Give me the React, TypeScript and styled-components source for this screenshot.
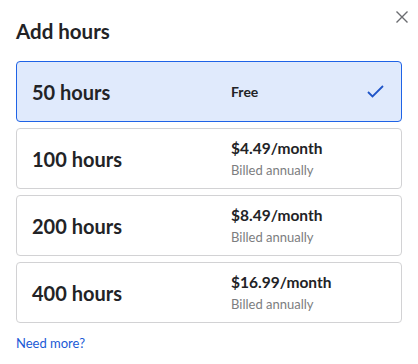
import React from "react";
import styled, { createGlobalStyle } from "styled-components";

const Global = createGlobalStyle`
  html, body { margin: 0; padding: 0; background: #ffffff; }
  body { font-family: Lato, "Noto Sans", sans-serif; color: #222326; }
`;

const Dialog = styled.div`
  width: 418px;
  height: 364px;
  box-sizing: border-box;
  padding: 0 16px;
  display: flex;
  flex-direction: column;
`;

const Header = styled.div`
  display: flex;
  justify-content: space-between;
  align-items: flex-start;
  height: 61px;
`;

const Title = styled.h2`
  margin: 18px 0 0 0;
  font-size: 20.5px;
  font-weight: 700;
  line-height: 26px;
  color: #222326;
`;

const Close = styled.button`
  border: none;
  background: none;
  padding: 0;
  margin: 11px -6px 0 0;
  width: 12px;
  height: 12px;
  display: flex;
  cursor: pointer;
`;

const List = styled.div`
  display: flex;
  flex-direction: column;
  gap: 6px;
`;

const Card = styled.div<{ $selected?: boolean }>`
  box-sizing: border-box;
  height: 61px;
  border: 1px solid ${(p) => (p.$selected ? "#1f63e6" : "#d2d2d4")};
  background: ${(p) => (p.$selected ? "#e0eafc" : "#ffffff")};
  border-radius: 4px;
  display: grid;
  grid-template-columns: 199px 1fr auto;
  align-items: center;
  padding: 0 17px 0 15px;
`;

const Hours = styled.div`
  font-size: 20px;
  font-weight: 700;
  color: #222326;
`;

const Price = styled.div`
  display: flex;
  flex-direction: column;
  gap: 4px;
`;

const Amount = styled.div<{ $small?: boolean }>`
  font-size: ${(p) => (p.$small ? "14px" : "15.5px")};
  font-weight: 700;
  line-height: 19px;
  color: #222326;
`;

const Billed = styled.div`
  font-size: 13px;
  line-height: 16px;
  color: #7c7d80;
`;

const More = styled.a`
  margin-top: 12px;
  font-size: 13px;
  color: #1a5ad6;
  text-decoration: none;
`;

const plans = [
  { hours: "50 hours", price: "Free", selected: true },
  { hours: "100 hours", price: "$4.49/month" },
  { hours: "200 hours", price: "$8.49/month" },
  { hours: "400 hours", price: "$16.99/month" },
];

export default function App() {
  return (
    <>
      <Global />
      <Dialog>
        <Header>
          <Title>Add hours</Title>
          <Close aria-label="Close">
            <svg width="12" height="12" viewBox="0 0 12 12">
              <path d="M0.5 0.5L11.5 11.5M11.5 0.5L0.5 11.5" stroke="#6b6c70" strokeWidth="1.4" />
            </svg>
          </Close>
        </Header>
        <List>
          {plans.map((p) => (
            <Card key={p.hours} $selected={p.selected}>
              <Hours>{p.hours}</Hours>
              <Price>
                <Amount $small={p.selected}>{p.price}</Amount>
                {!p.selected && <Billed>Billed annually</Billed>}
              </Price>
              {p.selected ? (
                <svg width="17" height="13" viewBox="0 0 17 13">
                  <path d="M1 7L5.5 11.5L16 1" stroke="#1f55c8" strokeWidth="1.8" fill="none" />
                </svg>
              ) : (
                <span />
              )}
            </Card>
          ))}
        </List>
        <More href="#">Need more?</More>
      </Dialog>
    </>
  );
}
